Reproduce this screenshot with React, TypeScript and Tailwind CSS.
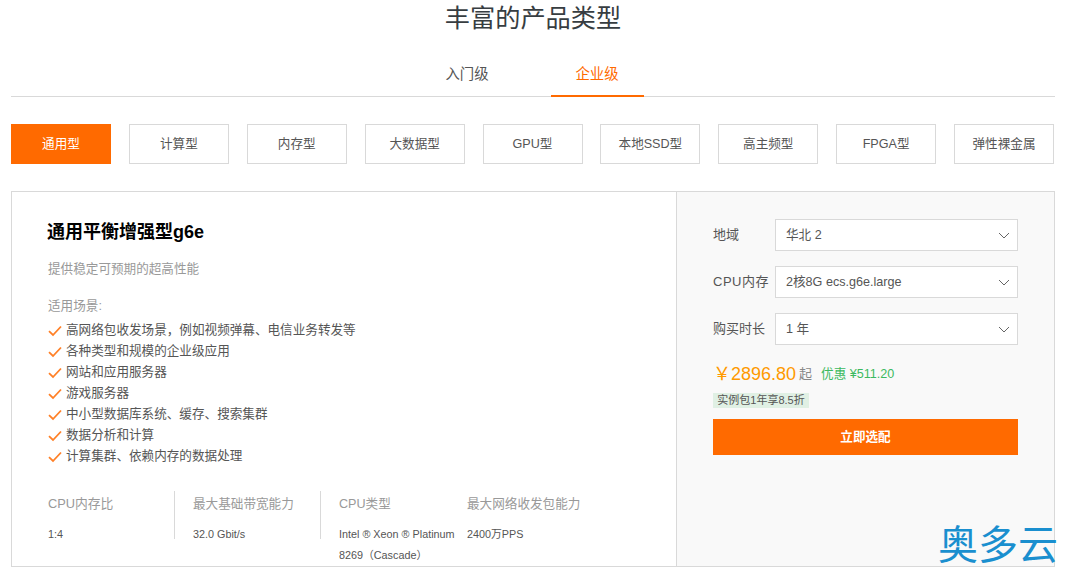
import React from "react";

const font = { fontFamily: '"Liberation Sans", "Noto Sans CJK SC", sans-serif' };
const types = ["通用型", "计算型", "内存型", "大数据型", "GPU型", "本地SSD型", "高主频型", "FPGA型", "弹性裸金属"];
const uses = [
  "高网络包收发场景，例如视频弹幕、电信业务转发等",
  "各种类型和规模的企业级应用",
  "网站和应用服务器",
  "游戏服务器",
  "中小型数据库系统、缓存、搜索集群",
  "数据分析和计算",
  "计算集群、依赖内存的数据处理",
];

function Check() {
  return (
    <svg width="14" height="12" viewBox="0 0 14 12" fill="none" className="shrink-0">
      <path d="M1 6.2 L5 10 L13 1.5" stroke="#ff6a00" strokeOpacity="0.85" strokeWidth="1.8" />
    </svg>
  );
}

function Select({ label, value, wide }: { label: string; value: string; wide?: boolean }) {
  return (
    <div className="flex items-center h-8">
      <span className={wide ? "w-[62px] shrink-0 text-[13px] text-[#555] tracking-[0.5px]" : "w-[62px] shrink-0 text-[13px] text-[#555]"}>{label}</span>
      <div className="flex items-center justify-between w-[243px] h-8 bg-white border border-[#d9d9d9] pl-[10px] pr-[7px] text-[12.6px] text-[#555]">
        <span>{value}</span>
        <svg width="12" height="7" viewBox="0 0 12 7" fill="none">
          <path d="M1 1 L6 6 L11 1" stroke="#666" strokeWidth="1" />
        </svg>
      </div>
    </div>
  );
}

export default function App() {
  return (
    <div style={font} className="w-[1066px] h-[575px] overflow-hidden bg-white relative px-[11px]">
      <h1 className="h-9 leading-[37px] text-center text-[25.2px] font-normal text-[#373d41]">丰富的产品类型</h1>
      <div className="mt-4 h-[45px] border-b border-[#d9d9d9] flex justify-center gap-[37px] pr-[2px]">
        <div className="w-[93px] h-[45px] leading-[44px] text-center text-[14.4px] text-[#555]">入门级</div>
        <div className="w-[93px] h-[45px] leading-[44px] text-center text-[14.4px] text-[#ff6a00] border-b-2 border-[#ff6a00]">企业级</div>
      </div>
      <div className="mt-[27px] flex justify-between pr-px">
        {types.map((t, i) => (
          <div
            key={t}
            className={
              i === 0
                ? "w-[100px] h-10 leading-[38px] text-center text-[12.6px] bg-[#ff6a00] border border-[#ff6a00] text-white"
                : "w-[100px] h-10 leading-[38px] text-center text-[12.6px] bg-white border border-[#d9d9d9] text-[#555]"
            }
          >
            {t}
          </div>
        ))}
      </div>
      <div className="mt-[27px] h-[376px] flex border border-[#d9d9d9]">
        <div className="w-[665px] shrink-0 border-r border-[#d9d9d9] pl-9 pt-[27px]">
          <h2 className="-ml-px text-[18px] leading-[26px] font-bold text-black">通用平衡增强型g6e</h2>
          <p className="mt-[14px] text-[12.6px] leading-[20px] text-[#999]">提供稳定可预期的超高性能</p>
          <p className="mt-[17px] text-[12.6px] leading-[20px] text-[#999]">适用场景:</p>
          <ul className="mt-[4px]">
            {uses.map((u) => (
              <li key={u} className="flex items-center gap-1 h-[21px] text-[12.6px] text-[#555]">
                <Check />
                <span>{u}</span>
              </li>
            ))}
          </ul>
          <div className="mt-6 flex">
            <div className="w-[127px] h-12 border-r border-[#d9d9d9]">
              <div className="text-[12.8px] leading-[26px] text-[#999]">CPU内存比</div>
              <div className="mt-[7px] text-[10.8px] leading-[21px] text-[#555]">1:4</div>
            </div>
            <div className="w-[146px] h-12 pl-[18px] border-r border-[#d9d9d9]">
              <div className="text-[12.6px] leading-[26px] text-[#999]">最大基础带宽能力</div>
              <div className="mt-[7px] text-[10.8px] leading-[21px] text-[#555]">32.0 Gbit/s</div>
            </div>
            <div className="w-[146px] pl-[18px]">
              <div className="text-[12.6px] leading-[26px] text-[#999]">CPU类型</div>
              <div className="mt-[7px] text-[10.8px] leading-[21px] text-[#555]">Intel ® Xeon ® Platinum 8269（Cascade）</div>
            </div>
            <div>
              <div className="text-[12.6px] leading-[26px] text-[#999]">最大网络收发包能力</div>
              <div className="mt-[7px] text-[10.8px] leading-[21px] text-[#555]">2400万PPS</div>
            </div>
          </div>
        </div>
        <div className="flex-1 bg-[#f9f9f9] pl-9 pt-[27px]">
          <div className="flex flex-col gap-[15px]">
            <Select label="地域" value="华北 2" />
            <Select label="CPU内存" value="2核8G ecs.g6e.large" wide />
            <Select label="购买时长" value="1 年" />
          </div>
          <div className="mt-[17px] h-6 flex items-center">
            <span className="text-[#ff9900] text-[18px]">￥2896.80</span>
            <span className="ml-[3px] text-[13px] text-[#888]">起</span>
            <span className="ml-[9px] text-[12.6px] text-[#3cb960]">优惠 ¥511.20</span>
          </div>
          <div className="mt-[7px] w-[96px] h-[15px] leading-[15px] text-center whitespace-nowrap bg-[#e0f0e4] text-[11px] text-[#555]">实例包1年享8.5折</div>
          <div className="mt-[11px] w-[305px] h-9 leading-9 text-center bg-[#ff6a00] text-white text-[12.6px] font-bold">立即选配</div>
        </div>
      </div>
      <div className="absolute left-[938px] top-[522px] text-[40px] leading-[46px] text-[#1a8fcf] whitespace-nowrap">奥多云</div>
    </div>
  );
}
